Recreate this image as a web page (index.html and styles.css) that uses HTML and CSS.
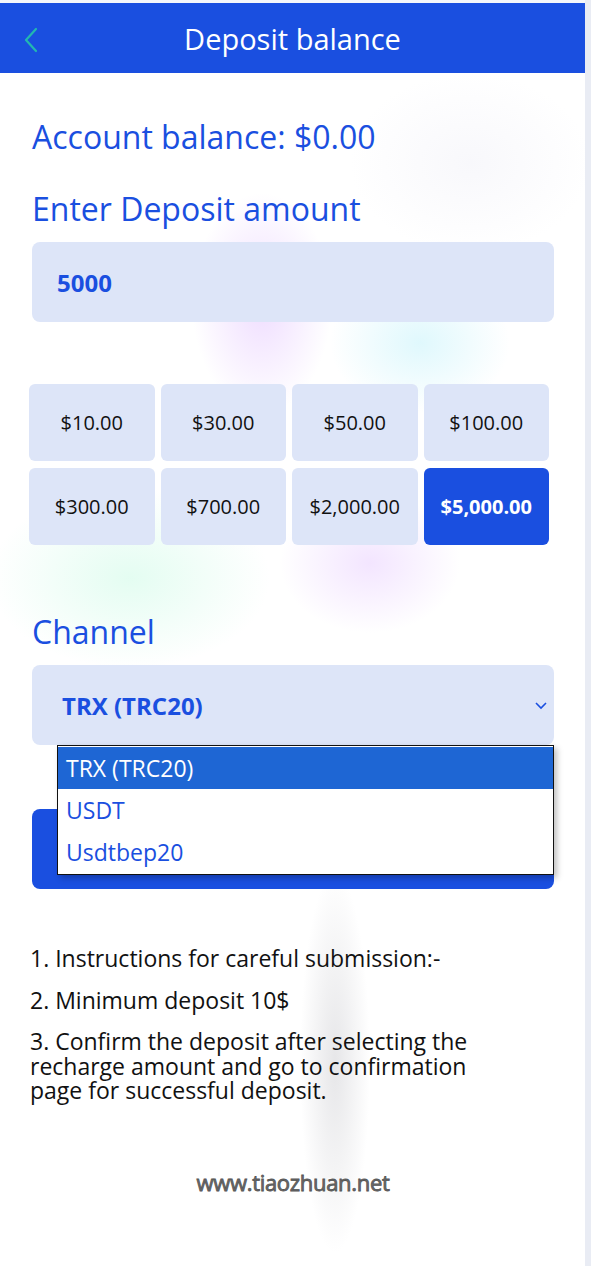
FILE: index.html
```html
<!doctype html>
<html>

<head>
  <meta charset="UTF-8">
  <title>Deposit balance</title>
  <link rel="stylesheet" href="styles.css">
</head>

<body>
  <div class="page">
    <header class="topbar">
      <span class="back">
        <svg width="16" height="26" viewBox="0 0 16 26"><path d="M13 2 L3 13 L13 24" fill="none" stroke="#22b8b0" stroke-width="2.2" stroke-linecap="round" stroke-linejoin="round"/></svg>
      </span>
      <h1>Deposit balance</h1>
    </header>

    <main class="content">
      <h2 class="balance">Account balance: $0.00</h2>
      <h2 class="label">Enter Deposit amount</h2>
      <div class="field">5000</div>

      <div class="amounts">
        <div class="amt">$10.00</div>
        <div class="amt">$30.00</div>
        <div class="amt">$50.00</div>
        <div class="amt">$100.00</div>
        <div class="amt">$300.00</div>
        <div class="amt">$700.00</div>
        <div class="amt">$2,000.00</div>
        <div class="amt active">$5,000.00</div>
      </div>

      <h2 class="label channel">Channel</h2>
      <div class="select-wrap">
        <div class="field select">
          <span>TRX (TRC20)</span>
          <svg width="14" height="10" viewBox="0 0 14 10"><path d="M2 3 L7 8 L12 3" fill="none" stroke="#1a4fe0" stroke-width="1.6"/></svg>
        </div>
        <ul class="options">
          <li class="on">TRX (TRC20)</li>
          <li>USDT</li>
          <li>Usdtbep20</li>
        </ul>
      </div>
      <div class="submit"></div>

      <div class="notes">
        <p>1. Instructions for careful submission:-</p>
        <p>2. Minimum deposit 10$</p>
        <p>3. Confirm the deposit after selecting the recharge amount and go to confirmation page for successful deposit.</p>
      </div>

      <div class="mark">www.tiaozhuan.net</div>
    </main>
  </div>
</body>

</html>
```

FILE: styles.css
```css
body {
  margin: 0;
  background: #e9ecf4;
  font-family: "Open Sans", "Noto Sans", sans-serif;
}

.page {
  width: 585px;
  min-height: 1266px;
  background:
    radial-gradient(ellipse 70px 110px at 262px 300px, rgba(215, 170, 255, 0.4), rgba(255, 255, 255, 0)),
    radial-gradient(ellipse 90px 70px at 420px 340px, rgba(185, 240, 250, 0.45), rgba(255, 255, 255, 0)),
    radial-gradient(ellipse 140px 90px at 130px 575px, rgba(195, 250, 225, 0.45), rgba(255, 255, 255, 0)),
    radial-gradient(ellipse 90px 70px at 370px 560px, rgba(225, 190, 255, 0.4), rgba(255, 255, 255, 0)),
    radial-gradient(ellipse 120px 90px at 470px 160px, rgba(235, 235, 245, 0.35), rgba(255, 255, 255, 0)),
    radial-gradient(ellipse 35px 190px at 335px 1060px, rgba(200, 200, 205, 0.45), rgba(255, 255, 255, 0)),
    #fff;
  border-top: 3px solid #f5f7fb;
}

.topbar {
  height: 70px;
  background: #1a4fe0;
  display: flex;
  align-items: center;
  justify-content: center;
  position: relative;
}

.back {
  position: absolute;
  left: 23px;
  top: 24px;
}

.topbar h1 {
  margin: 0;
  color: #fff;
  font-size: 29px;
  font-weight: 400;
}

.content {
  padding: 44px 31px 0 32px;
}

.balance,
.label {
  margin: 0;
  color: #1a4fe0;
  font-size: 32px;
  font-weight: 400;
  line-height: 40px;
}

.label {
  margin-top: 32px;
}

.field {
  margin-top: 13px;
  height: 80px;
  box-sizing: border-box;
  padding: 0 25px;
  display: flex;
  align-items: center;
  background: #dde5f8;
  border-radius: 8px;
  color: #1a4fe0;
  font-size: 24px;
  font-weight: 700;
}

.amounts {
  margin: 62px 5px 0 -3px;
  display: grid;
  grid-template-columns: repeat(4, 1fr);
  gap: 7px 6px;
}

.amt {
  height: 77px;
  display: flex;
  align-items: center;
  justify-content: center;
  background: #dde5f8;
  border-radius: 6px;
  font-size: 20px;
  color: #111;
}

.amt.active {
  background: #1a4fe0;
  color: #fff;
  font-weight: 700;
}

.channel {
  margin-top: 67px;
}

.select-wrap {
  position: relative;
}

.select {
  padding: 0 6px 0 30px;
  justify-content: space-between;
}

.options {
  position: absolute;
  left: 25px;
  right: 0;
  top: 80px;
  margin: 0;
  padding: 1px 0;
  list-style: none;
  background: #fff;
  border: 1px solid #111;
  box-shadow: 3px 3px 6px rgba(0, 0, 0, 0.25);
  z-index: 2;
}

.options li {
  height: 42px;
  padding: 0 8px;
  display: flex;
  align-items: center;
  font-size: 23px;
  color: #1a4fe0;
}

.options li.on {
  background: #1e66d4;
  color: #fff;
}

.submit {
  margin-top: 64px;
  height: 80px;
  background: #1a4fe0;
  border-radius: 8px;
}

.notes {
  margin: 57px 0 0 -2px;
  width: 480px;
  font-size: 23px;
  color: #111;
}

.notes p {
  margin: 0 0 17px;
  line-height: 24.5px;
}

.mark {
  margin-top: 64px;
  text-align: center;
  font-size: 22px;
  color: #6a6a6a;
  letter-spacing: -0.3px;
  text-shadow: 0 0 2px #fff, 1px 1px 0 #fff, -1px -1px 0 #fff;
  -webkit-text-stroke: 0.8px #555;
}
```
